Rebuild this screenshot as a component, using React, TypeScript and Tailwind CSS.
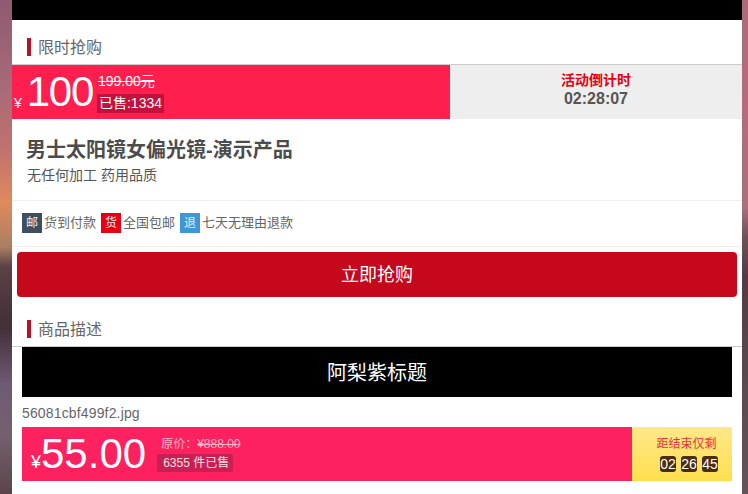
const cjk = "font-['Liberation_Sans','Noto_Sans_CJK_SC',sans-serif]";

function SectionTitle({ children, className }: { children: string; className: string }) {
  return (
    <div className={`flex items-center gap-[8px] pl-[15px] ${className}`}>
      <span className="h-[18px] w-[4px] bg-[#b5122b]" />
      <span className="-ml-[1px] translate-y-[1px] text-[16px] leading-[18px] text-[#666666]">{children}</span>
    </div>
  );
}

function Tag({ mark, color, label }: { mark: string; color: string; label: string }) {
  return (
    <div className="flex items-center gap-[2px]">
      <span className={`flex h-[20px] w-[20px] items-center justify-center text-[12px] text-[#e8eef4] ${color}`}>{mark}</span>
      <span className="text-[13px] leading-[20px] text-[#666666]">{label}</span>
    </div>
  );
}

function Digit({ children }: { children: string }) {
  return (
    <span className="flex h-[16px] w-[16px] items-center justify-center rounded-[3px] bg-[#4b2c0d] font-['Liberation_Sans'] text-[14px] text-white">
      {children}
    </span>
  );
}

export default function App() {
  return (
    <div className={`flex h-[494px] w-[748px] overflow-hidden ${cjk}`}>
      <div className="w-[12px] bg-[linear-gradient(180deg,#8f5a72_0%,#a96a78_18%,#c0716e_30%,#e08a5c_41%,#a87f63_50%,#5a4146_54%,#432f36_66%,#6f5a75_78%,#75606f_88%,#5b4548_100%)]" />
      <div className="h-full w-[730px] bg-white">
        <div className="h-[20px] bg-black" />
        <SectionTitle className="pt-[18px] pb-[8px]">限时抢购</SectionTitle>
        <div className="flex h-[55px] border-t border-[#cccccc]">
          <div className="flex w-[438px] items-center bg-[#fe1f4f] text-white">
            <span className="mt-[22px] ml-[2px] text-[14px] leading-[16px]">¥</span>
            <span className="ml-[5px] text-[42px] leading-[54px] tracking-[-1.3px]">100</span>
            <div className="ml-[4px] flex flex-col items-start">
              <span className="ml-[1px] text-[14px] leading-[20px] line-through">199.00元</span>
              <span className="mt-[3px] bg-[#c4103c] px-[2px] text-[14px] leading-[19px]">已售:1334</span>
            </div>
          </div>
          <div className="flex flex-1 flex-col items-center bg-[#eeeeee] pt-[7px]">
            <span className="text-[14px] leading-[17px] font-bold text-[#e60012]">活动倒计时</span>
            <span className="text-[16px] leading-[20px] font-bold text-[#555555]">02:28:07</span>
          </div>
        </div>
        <div className="h-[82px] border-b border-[#eeeeee] pt-[19px] pl-[14px]">
          <div className="text-[20px] leading-[24px] font-bold text-[#4c4c4c]">男士太阳镜女偏光镜-演示产品</div>
          <div className="mt-[3px] pl-[1px] text-[14px] leading-[20px] text-[#555555]">无任何加工 药用品质</div>
        </div>
        <div className="flex h-[46px] items-center gap-[5px] border-b border-[#eeeeee] pb-[2px] pl-[10px]">
          <Tag mark="邮" color="bg-[#3f4f5f]" label="货到付款" />
          <Tag mark="货" color="bg-[#e60012]" label="全国包邮" />
          <Tag mark="退" color="bg-[#3f97d8]" label="七天无理由退款" />
        </div>
        <div className="px-[5px] pt-[5px]">
          <div className="flex h-[45px] items-center justify-center rounded-[4px] bg-[#c6081d] pt-[2px] text-[18px] text-white">立即抢购</div>
        </div>
        <SectionTitle className="pt-[23px] pb-[8px]">商品描述</SectionTitle>
        <div className="border-t border-[#cccccc] px-[10px]">
          <div className="flex h-[50px] items-center justify-center bg-black pt-[2px] text-[20px] text-white">阿梨紫标题</div>
          <div className="pt-[7px] pb-[5px] text-[14px] leading-[18px] tracking-[0.15px] text-[#666666]">56081cbf499f2.jpg</div>
          <div className="flex h-[54px]">
            <div className="flex flex-1 items-center bg-[#fe2160] text-white">
              <span className="mt-[15px] ml-[9px] text-[18px] leading-[20px]">¥</span>
              <span className="text-[42px] leading-[54px]">55.00</span>
              <div className="ml-[11px] flex flex-col items-start">
                <span className="pl-[4px] text-[12px] leading-[16px] text-[#ffb3c6]">
                  原价：<span className="line-through">¥888.00</span>
                </span>
                <span className="mt-[2px] rounded-[2px] bg-[#c91f52] pr-[4px] pl-[6px] text-[12px] leading-[18px] text-[#ffe0e8]">6355 件已售</span>
              </div>
            </div>
            <div className="flex w-[100px] flex-col items-center bg-[linear-gradient(180deg,#ffe88a,#ffdf4d)] pt-[9px]">
              <span className="ml-[9px] text-[12px] leading-[16px] text-[#e8323c]">距结束仅剩</span>
              <div className="mt-[4px] ml-[14px] flex gap-[5px]">
                <Digit>02</Digit>
                <Digit>26</Digit>
                <Digit>45</Digit>
              </div>
            </div>
          </div>
        </div>
      </div>
      <div className="w-[6px] bg-[linear-gradient(180deg,#ad6a78_0%,#b56c7a_20%,#a8707c_42%,#6f5258_48%,#503c42_56%,#5a474d_72%,#66525a_100%)]" />
    </div>
  );
}
